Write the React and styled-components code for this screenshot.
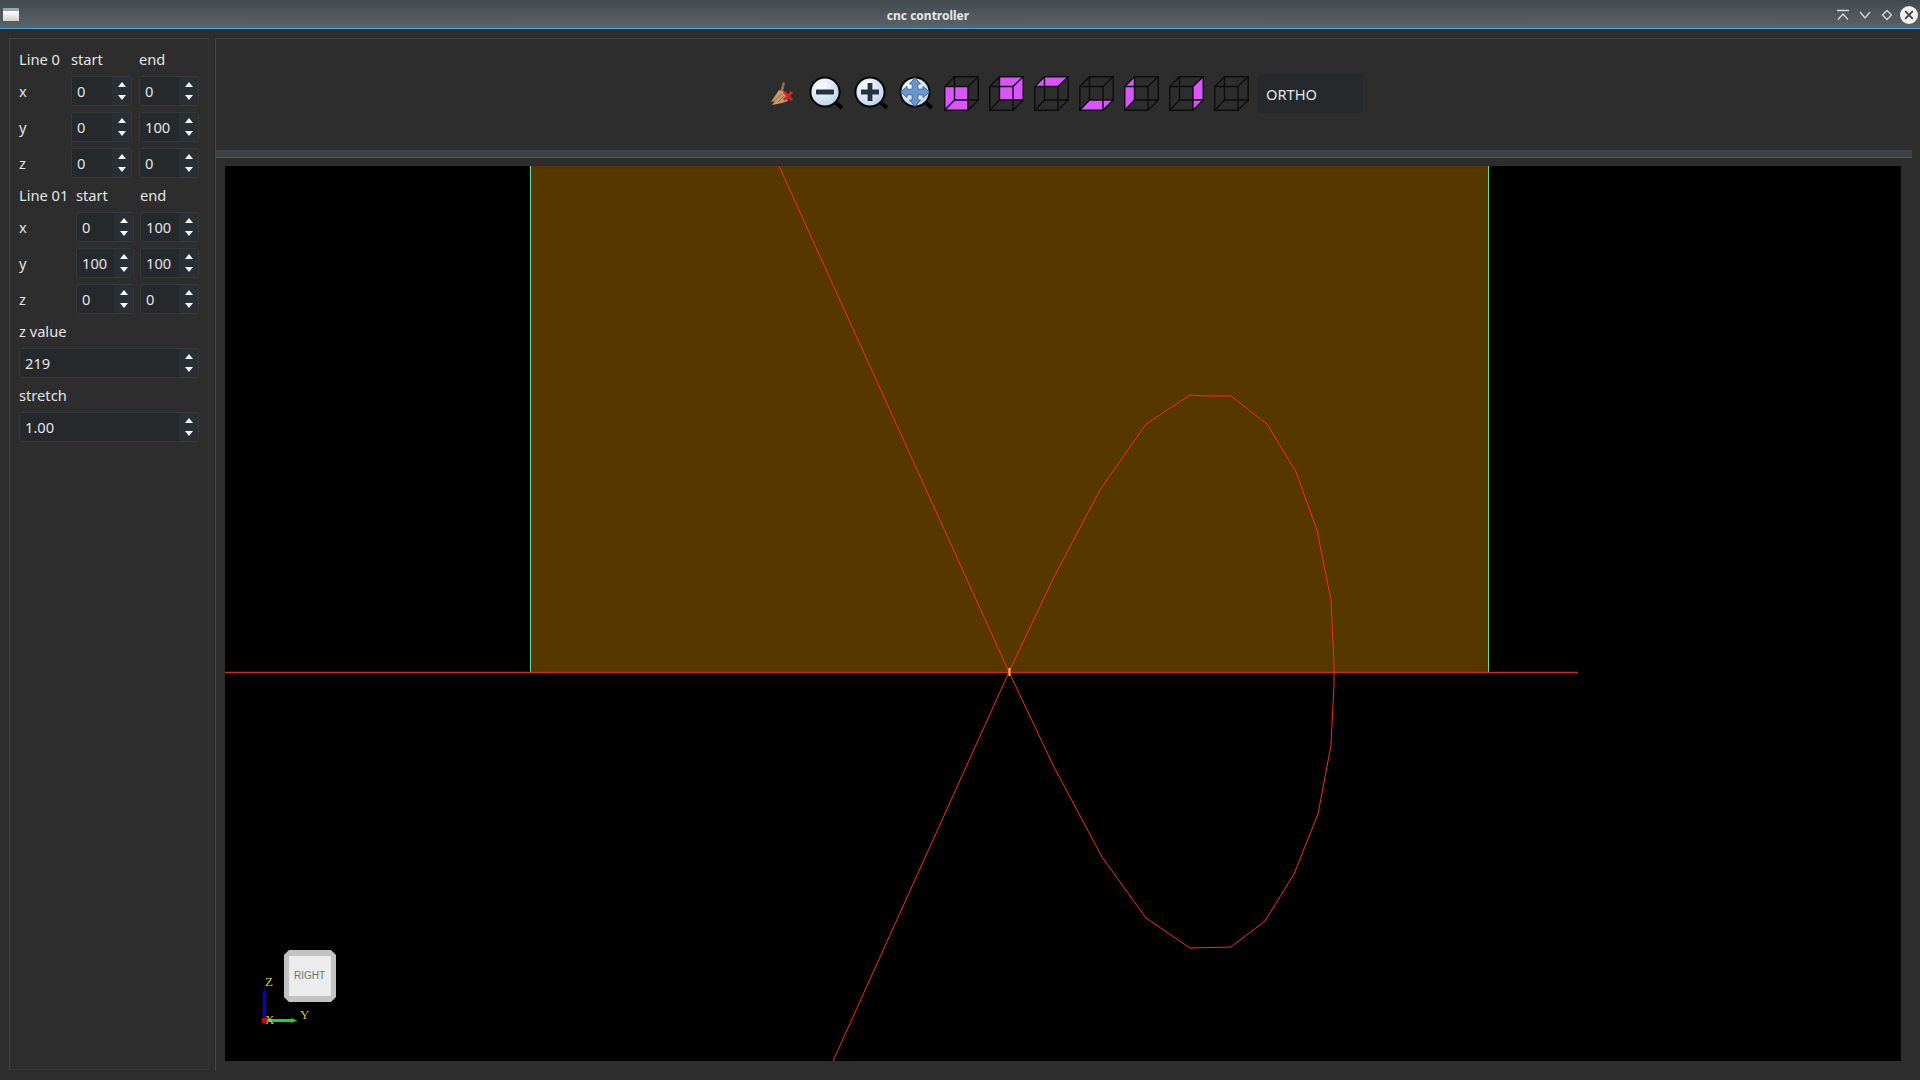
import React from "react";
import styled, { createGlobalStyle } from "styled-components";

const GlobalStyle = createGlobalStyle`
  html, body {
    margin: 0;
    padding: 0;
    background: #2d2d2d;
    overflow: hidden;
  }
`;

const lines = [
  {
    title: "Line 0",
    headHeight: "34px",
    headInset: "0",
    columns: "45px 61px 60px",
    gap: "7px",
    rows: [
      ["x", "0", "0"],
      ["y", "0", "100"],
      ["z", "0", "0"],
    ],
  },
  {
    title: "Line 01",
    headHeight: "28px",
    headInset: "6px",
    columns: "51px 58px 59px",
    gap: "6px",
    rows: [
      ["x", "0", "100"],
      ["y", "100", "100"],
      ["z", "0", "0"],
    ],
  },
];

const FACES = {
  front: "0.8,10.5 24,10.5 24,34.2 0.8,34.2",
  back: "10.5,0.8 34.2,0.8 34.2,24 10.5,24",
  top: "0.8,10.5 10.5,0.8 34.2,0.8 24,10.5",
  bottom: "0.8,34.2 10.5,24 34.2,24 24,34.2",
  left: "0.8,10.5 10.5,0.8 10.5,24 0.8,34.2",
  right: "24,10.5 34.2,0.8 34.2,24 24,34.2",
};

const curve =
  "1009,672 1053,579 1100,490 1146,424 1190,395 1205,396 1231,396 1267,424 1296,472 1317,530 1331,600 1334,663 1334,685 1331,745 1318,814 1294,874 1265,921 1231,947 1190,948 1146,918 1102,857 1053,765 1009,672";

function SpinBox({ value, wide }) {
  return (
    <Spin $wide={wide}>
      <SpinValue>{value}</SpinValue>
      <SpinButtons>
        <ArrowUp />
        <ArrowDown />
      </SpinButtons>
    </Spin>
  );
}

function CubeIcon({ face }) {
  return (
    <svg width="35" height="35" viewBox="0 0 35 35">
      {face && <polygon points={FACES[face]} fill="#da55ff" />}
      <g fill="none" stroke="#0d0d0d" strokeWidth="1.4">
        <polygon points={FACES.back} />
        <polygon points={FACES.front} />
        <path d="M0.8 10.5 L10.5 0.8 M24 10.5 L34.2 0.8 M24 34.2 L34.2 24 M0.8 34.2 L10.5 24" />
      </g>
    </svg>
  );
}

function BrushIcon() {
  return (
    <svg width="24" height="26" viewBox="0 0 24 26">
      <path d="M13 1 L15 2 L13 11 L10 10 Z" fill="#9a6a45" />
      <path d="M9 9 L15 11 L18 20 L12 22 L2 24 L5 20 L1 21 Z" fill="#c79a72" />
      <path d="M4 20 L12 13 M8 21 L14 15" stroke="#8f6a4d" strokeWidth="1" />
      <path d="M14 11 L22 19 M22 11 L14 19" stroke="#d8242c" strokeWidth="3" />
    </svg>
  );
}

function LensIcon({ children }) {
  return (
    <svg width="36" height="36" viewBox="0 0 36 36">
      <defs>
        <radialGradient id="lens" cx="0.38" cy="0.32" r="0.8">
          <stop offset="0" stopColor="#ffffff" />
          <stop offset="1" stopColor="#b4cdea" />
        </radialGradient>
      </defs>
      <path d="M26 26 L33 32" stroke="#050505" strokeWidth="4" />
      <circle cx="16" cy="16" r="14.6" fill="url(#lens)" stroke="#060606" strokeWidth="2" />
      {children}
    </svg>
  );
}

function FitIcon() {
  return (
    <LensIcon>
      <path
        d="M16 1.5 L21.5 8 L18.8 8 L18.8 13.2 L24 13.2 L24 10.5 L30.5 16 L24 21.5 L24 18.8 L18.8 18.8 L18.8 24 L21.5 24 L16 30.5 L10.5 24 L13.2 24 L13.2 18.8 L8 18.8 L8 21.5 L1.5 16 L8 10.5 L8 13.2 L13.2 13.2 L13.2 8 L10.5 8 Z"
        fill="#6a97cc"
        stroke="#41699c"
        strokeWidth="1"
      />
    </LensIcon>
  );
}

function AxisWidget() {
  return (
    <g>
      <polygon points="289,950 331,950 336,955 336,997 331,1002 289,1002 284,997 284,955" fill="#c2c2c2" />
      <rect x="289" y="956" width="42" height="40" fill="#ececec" />
      <text x="309.5" y="979" fontFamily="Liberation Sans, sans-serif" fontSize="10" fill="#707070" textAnchor="middle">
        RIGHT
      </text>
      <path d="M264.5 1019 L264.5 995" stroke="#0000e0" strokeWidth="3" />
      <polygon points="262,996 267,996 264.5,989" fill="#0000e0" />
      <path d="M266 1020.5 L292 1020.5" stroke="#10e010" strokeWidth="3" />
      <polygon points="291,1018 291,1023 297,1020.5" fill="#10e010" />
      <rect x="262" y="1018" width="5" height="5" fill="#b01010" />
      <g fontFamily="Liberation Serif, serif" fontSize="13" fill="#d8c040">
        <text x="265" y="986">Z</text>
        <text x="300" y="1019">Y</text>
        <text x="265" y="1024">X</text>
      </g>
    </g>
  );
}

export default function App() {
  return (
    <Window>
      <GlobalStyle />
      <TitleBar>
        <WindowIcon />
        <Title>cnc controller</Title>
        <WindowControls>
          <svg width="14" height="12" viewBox="0 0 14 12">
            <path d="M1 1.5 L13 1.5 M2 10.5 L7 5 L12 10.5" fill="none" stroke="#d6dadd" strokeWidth="1.3" />
          </svg>
          <svg width="14" height="12" viewBox="0 0 14 12">
            <path d="M2 3 L7 9 L12 3" fill="none" stroke="#d6dadd" strokeWidth="1.3" />
          </svg>
          <svg width="14" height="12" viewBox="0 0 14 12">
            <path d="M7 1.5 L11.5 6 L7 10.5 L2.5 6 Z" fill="none" stroke="#d6dadd" strokeWidth="1.3" />
          </svg>
          <CloseButton>
            <svg width="16" height="16" viewBox="0 0 16 16">
              <path d="M4.2 4.2 L11.8 11.8 M11.8 4.2 L4.2 11.8" stroke="#3a4045" strokeWidth="1.8" />
            </svg>
          </CloseButton>
        </WindowControls>
      </TitleBar>

      <Body>
        <SidePanel>
          {lines.map((line) => (
            <React.Fragment key={line.title}>
              <SpinRow $columns={line.columns} $gap={line.gap} $height={line.headHeight} $inset={line.headInset}>
                <Label>{line.title}</Label>
                <Label>start</Label>
                <Label>end</Label>
              </SpinRow>
              {line.rows.map(([axis, start, end]) => (
                <SpinRow key={axis} $columns={line.columns} $gap={line.gap} $height="30px" $after="6px">
                  <Label>{axis}</Label>
                  <SpinBox value={start} />
                  <SpinBox value={end} />
                </SpinRow>
              ))}
            </React.Fragment>
          ))}
          <FieldLabel $height="28px" $line="22px">z value</FieldLabel>
          <SpinBox value="219" wide />
          <FieldLabel $height="34px" $line="35px">stretch</FieldLabel>
          <SpinBox value="1.00" wide />
        </SidePanel>

        <MainPanel>
          <Toolbar>
            <BrushSlot>
              <BrushIcon />
            </BrushSlot>
            <Lenses>
              <LensIcon>
                <rect x="7" y="13.6" width="18" height="4.8" rx="1" fill="#26323d" />
              </LensIcon>
              <LensIcon>
                <path d="M7 13.6 H13.6 V7 H18.4 V13.6 H25 V18.4 H18.4 V25 H13.6 V18.4 H7 Z" fill="#26323d" />
              </LensIcon>
              <FitIcon />
            </Lenses>
            <Cubes>
              {["front", "back", "top", "bottom", "left", "right", null].map((face, i) => (
                <CubeIcon key={i} face={face} />
              ))}
            </Cubes>
            <ComboBox>ORTHO</ComboBox>
          </Toolbar>
          <Splitter />
          <Viewport>
            <svg width="1676" height="895" viewBox="225 166 1676 895">
              <rect x="530" y="166" width="958" height="506.5" fill="#573700" />
              <path d="M530.5 166 V672 M1488.5 166 V672" stroke="#55e6a8" strokeWidth="1" />
              <path d="M225 672.5 H1578" stroke="#e02020" strokeWidth="1.5" />
              <path d="M779 166 L1009 672 L833 1061" fill="none" stroke="#ff2a10" strokeWidth="1" />
              <polyline points={curve} fill="none" stroke="#ff2a10" strokeWidth="1" />
              <path d="M1009.5 668 V676" stroke="#ffc040" strokeWidth="2" />
              <AxisWidget />
            </svg>
          </Viewport>
        </MainPanel>
      </Body>
    </Window>
  );
}

const Window = styled.div`
  width: 1920px;
  height: 1080px;
  background: #2d2d2d;
  font-family: "Noto Sans", sans-serif;
  color: #e4e5e6;
  overflow: hidden;
`;

const TitleBar = styled.div`
  height: 28px;
  position: relative;
  display: flex;
  align-items: center;
  justify-content: center;
  background: linear-gradient(#434a4f, #5b6369);
  border-bottom: 1px solid #3daee9;
`;

const WindowIcon = styled.div`
  position: absolute;
  left: 3px;
  top: 8px;
  width: 16px;
  height: 13px;
  box-sizing: border-box;
  border-top: 3px solid #9aa4b0;
  background: linear-gradient(#ffffff, #d0d0d0);
`;

const Title = styled.div`
  font-size: 12px;
  font-weight: 700;
  color: #e6e8ea;
  margin-right: 64px;
  margin-top: 2px;
`;

const WindowControls = styled.div`
  position: absolute;
  right: 2px;
  top: 6px;
  display: flex;
  align-items: center;
  gap: 8px;
`;

const CloseButton = styled.div`
  width: 18px;
  height: 18px;
  margin-left: -2px;
  border-radius: 50%;
  background: #eef0f1;
  display: flex;
  align-items: center;
  justify-content: center;
`;

const Body = styled.div`
  position: relative;
  height: 1051px;
`;

const SidePanel = styled.div`
  position: absolute;
  left: 9px;
  top: 9px;
  width: 200px;
  height: 1032px;
  box-sizing: border-box;
  padding: 3px 0 0 9px;
  border-top: 1px solid #444;
  border-left: 1px solid #444;
  border-right: 1px solid #363636;
  border-bottom: 1px solid #363636;
`;

const SpinRow = styled.div`
  display: grid;
  box-sizing: border-box;
  grid-template-columns: ${(p) => p.$columns};
  column-gap: ${(p) => p.$gap};
  align-items: center;
  height: ${(p) => p.$height};
  padding-bottom: ${(p) => p.$inset || "0"};
  margin-bottom: ${(p) => p.$after || "0"};
`;

const Label = styled.div`
  font-size: 14.67px;
  line-height: 20px;
`;

const FieldLabel = styled(Label)`
  height: ${(p) => p.$height};
  line-height: ${(p) => p.$line};
`;

const Spin = styled.div`
  display: flex;
  box-sizing: border-box;
  width: ${(p) => (p.$wide ? "180px" : "100%")};
  height: 30px;
  background: #25292c;
  border: 1px solid #34393c;
  border-radius: 3px;
`;

const SpinValue = styled.div`
  flex: 1;
  font-size: 14.67px;
  line-height: 28px;
  padding-left: 5px;
`;

const SpinButtons = styled.div`
  width: 19px;
  display: flex;
  flex-direction: column;
  align-items: center;
  justify-content: space-between;
  padding: 5px 0;
  box-sizing: border-box;
  background: #2a2f33;
`;

const ArrowUp = styled.div`
  width: 0;
  height: 0;
  border-left: 4.5px solid transparent;
  border-right: 4.5px solid transparent;
  border-bottom: 5px solid #f6f6f6;
`;

const ArrowDown = styled(ArrowUp)`
  border-bottom: 0;
  border-top: 5px solid #f6f6f6;
`;

const MainPanel = styled.div`
  position: absolute;
  left: 215px;
  top: 9px;
  width: 1697px;
  height: 1032px;
  border-top: 1px solid #444;
  border-left: 1px solid #444;
  box-sizing: border-box;
`;

const Toolbar = styled.div`
  height: 111px;
  position: relative;
`;

const BrushSlot = styled.div`
  position: absolute;
  left: 554px;
  top: 42px;
  display: flex;
`;

const Lenses = styled.div`
  position: absolute;
  left: 593px;
  top: 37px;
  display: flex;
  gap: 9px;
`;

const Cubes = styled.div`
  position: absolute;
  left: 728px;
  top: 37px;
  display: flex;
  gap: 10px;
`;

const ComboBox = styled.div`
  position: absolute;
  left: 1042px;
  top: 35px;
  width: 105px;
  height: 39px;
  box-sizing: border-box;
  padding-left: 8px;
  line-height: 40px;
  font-size: 14.67px;
  background: #25292c;
  border-radius: 3px;
`;

const Splitter = styled.div`
  height: 8px;
  background: #3c4347;
  border-bottom: 1px solid #4c5b58;
  box-sizing: border-box;
`;

const Viewport = styled.div`
  position: absolute;
  left: 9px;
  top: 127px;
  width: 1676px;
  height: 895px;
  background: #000;
  svg {
    display: block;
  }
`;
